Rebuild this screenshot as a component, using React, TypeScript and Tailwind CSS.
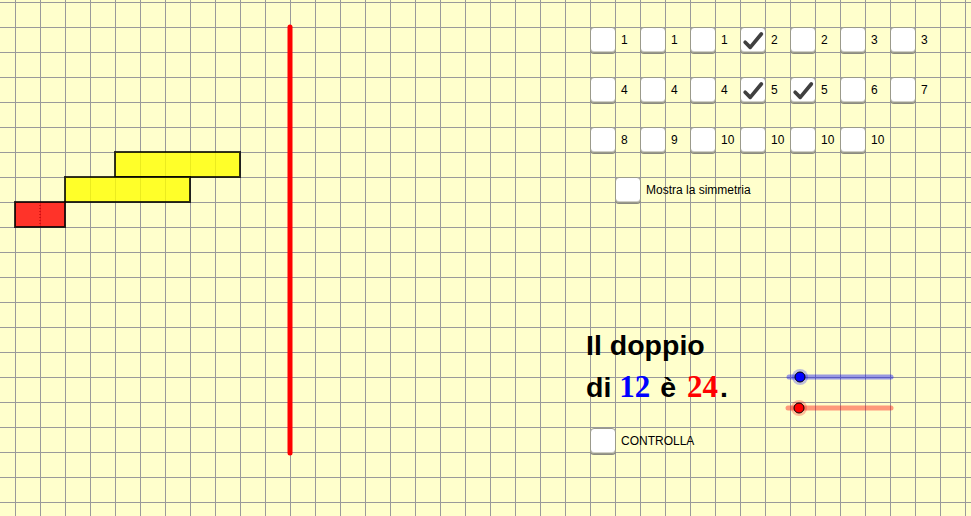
import React from 'react';

const rows: { label: string; checked?: boolean }[][] = [
  [{ label: '1' }, { label: '1' }, { label: '1' }, { label: '2', checked: true }, { label: '2' }, { label: '3' }, { label: '3' }],
  [{ label: '4' }, { label: '4' }, { label: '4' }, { label: '5', checked: true }, { label: '5', checked: true }, { label: '6' }, { label: '7' }],
  [{ label: '8' }, { label: '9' }, { label: '10' }, { label: '10' }, { label: '10' }, { label: '10' }],
];

function Box({ checked }: { checked?: boolean }) {
  return (
    <span className="w-[26px] h-[26px] shrink-0 rounded-[4px] border border-[#9a9a8c] bg-white shadow-[inset_0_-1px_0_#d0d0c8,0_1px_0_#8a8a80] flex items-center justify-center">
      {checked && (
        <svg width="26" height="26" viewBox="0 0 26 26">
          <path d="M4.5 15.5 L10 21 L22 6.5" fill="none" stroke="#404040" strokeWidth="4" strokeLinecap="round" strokeLinejoin="round" />
        </svg>
      )}
    </span>
  );
}

function Check({ label, checked }: { label: string; checked?: boolean }) {
  return (
    <label className="flex items-center gap-[5px] text-[12px] text-black">
      <Box checked={checked} />
      <span>{label}</span>
    </label>
  );
}

export default function App() {
  return (
    <div className="relative w-[971px] h-[516px] overflow-hidden bg-[#ffffcc] bg-[linear-gradient(to_right,#9a9a9a_1px,transparent_1px),linear-gradient(to_bottom,#9a9a9a_1px,transparent_1px)] bg-size-[25px_25px] bg-position-[15px_2px] font-['Liberation_Sans',Arial,sans-serif]">
      {/* drawing layer: shapes, axis of symmetry, sliders */}
      <svg className="absolute inset-0" width="971" height="516" viewBox="0 0 971 516">
        <rect x="115" y="152" width="125" height="25" fill="#ffff00" fillOpacity="0.8" stroke="#000" strokeOpacity="0.8" strokeWidth="2" />
        <rect x="65" y="177" width="125" height="25" fill="#ffff00" fillOpacity="0.8" stroke="#000" strokeOpacity="0.8" strokeWidth="2" />
        <rect x="15" y="202" width="50" height="25" fill="#ff0000" fillOpacity="0.8" stroke="#000" strokeOpacity="0.8" strokeWidth="2" />
        <line x1="40" y1="205" x2="40" y2="225" stroke="#b00000" strokeWidth="1" strokeDasharray="1 2" />
        <line x1="290" y1="27" x2="290" y2="453" stroke="#ff0000" strokeWidth="5" strokeLinecap="round" />

        <line x1="789" y1="377" x2="891" y2="377" stroke="#0000ff" strokeOpacity="0.4" strokeWidth="5" strokeLinecap="round" />
        <circle cx="800" cy="377" r="8" fill="#0000ff" fillOpacity="0.25" />
        <circle cx="800" cy="377" r="5" fill="#0000ff" stroke="#000" strokeWidth="1" />

        <line x1="788" y1="408" x2="891" y2="408" stroke="#ff0000" strokeOpacity="0.4" strokeWidth="5" strokeLinecap="round" />
        <circle cx="799" cy="408" r="8" fill="#ff0000" fillOpacity="0.25" />
        <circle cx="799" cy="408" r="5" fill="#ff0000" stroke="#000" strokeWidth="1" />
      </svg>

      {/* right-hand controls */}
      <div className="absolute left-[590px] top-[27px] flex flex-col">
        <div className="grid grid-cols-[repeat(7,50px)] auto-rows-[50px]">
          {rows.flat().map((c, i) => (
            <div key={i}>
              <Check label={c.label} checked={c.checked} />
            </div>
          ))}
        </div>

        <div className="pl-[25px]">
          <Check label="Mostra la simmetria" />
        </div>

        <div className="mt-[122px] -ml-[4px] leading-[41px] text-[28.5px] font-bold text-black">
          <div>Il doppio</div>
          <div>
            di{' '}
            <span className="font-['Liberation_Serif',serif] text-[31px] mr-[2px] text-[#0000ff]">12</span>{' '}
            è{' '}
            <span className="font-['Liberation_Serif',serif] text-[31px] ml-[3px] mr-[2px] text-[#ff0000]">24</span>.
          </div>
        </div>

        <div className="mt-[20px]">
          <Check label="CONTROLLA" />
        </div>
      </div>
    </div>
  );
}
